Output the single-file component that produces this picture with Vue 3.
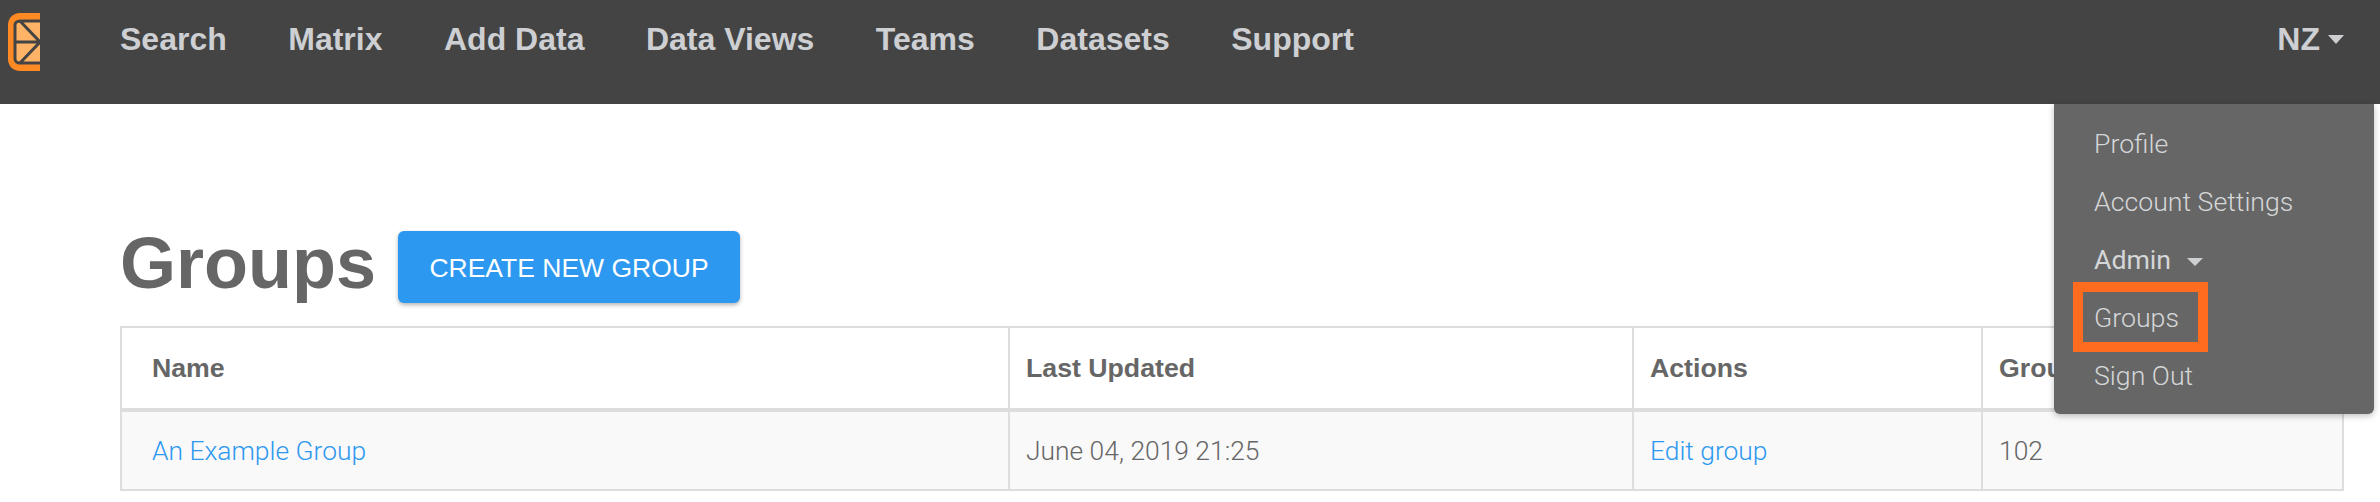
<script setup>
const navLinks = ["Search", "Matrix", "Add Data", "Data Views", "Teams", "Datasets", "Support"];
</script>

<template>
  <div class="page">
    <header class="navbar">
      <svg class="logo" width="32" height="58" viewBox="0 0 32 58">
        <path d="M32 0H12C5 0 0 5 0 12V46C0 53 5 58 12 58H32Z" fill="#ff8a24" />
        <path d="M32 8H12C9 8 7 10 7 12V46C7 48 9 50 12 50H32Z" fill="#ffb366" />
        <path
          d="M32 8H12C9 8 7 10 7 12V46C7 48 9 50 12 50H32M7 29H32M12 8L32 29L12 50"
          fill="none"
          stroke="#444"
          stroke-width="3"
        />
      </svg>
      <nav class="nav">
        <a v-for="link in navLinks" :key="link" class="nav__link">{{ link }}</a>
      </nav>
      <div class="user">NZ<span class="caret"></span></div>
    </header>

    <main class="content">
      <div class="title-row">
        <h1 class="title">Groups</h1>
        <button class="create">Create new group</button>
      </div>
      <table class="groups">
        <colgroup>
          <col class="col-name" />
          <col class="col-updated" />
          <col class="col-actions" />
          <col />
        </colgroup>
        <thead>
          <tr>
            <th>Name</th>
            <th>Last Updated</th>
            <th>Actions</th>
            <th>Group ID</th>
          </tr>
        </thead>
        <tbody>
          <tr>
            <td><a>An Example Group</a></td>
            <td>June 04, 2019 21:25</td>
            <td><a>Edit group</a></td>
            <td>102</td>
          </tr>
        </tbody>
      </table>
    </main>

    <ul class="menu">
      <li class="menu__item">Profile</li>
      <li class="menu__item">Account Settings</li>
      <li class="menu__item menu__item--admin">Admin<span class="caret caret--small"></span></li>
      <li class="menu__item menu__item--marked">Groups</li>
      <li class="menu__item">Sign Out</li>
    </ul>
  </div>
</template>

<style>
html,
body {
  margin: 0;
  background: #fff;
}
</style>

<style scoped>
.page {
  position: relative;
  height: 502px;
  overflow: hidden;
  font-family: "Liberation Sans", Arial, sans-serif;
  color: #666;
}

.navbar {
  display: flex;
  align-items: flex-start;
  box-sizing: border-box;
  height: 104px;
  padding: 13px 36px 0 8px;
  background: #444;
}

.logo {
  flex: none;
}

.nav {
  display: flex;
  gap: 61.5px;
  margin-left: 80px;
  padding-top: 8px;
}

.nav__link,
.user {
  color: #cdcfd2;
  font-size: 32px;
  font-weight: 700;
  line-height: 37px;
}

.user {
  display: flex;
  align-items: center;
  margin-left: auto;
  padding-top: 8px;
}

.caret {
  width: 0;
  height: 0;
  margin-left: 8px;
  border-top: 9px solid #cdcfd2;
  border-left: 8px solid transparent;
  border-right: 8px solid transparent;
}

.content {
  padding: 0 36px 0 120px;
}

.title-row {
  display: flex;
  align-items: center;
  height: 222px;
  box-sizing: border-box;
  padding-top: 104px;
}

.title {
  margin: 0 22px 8px 0;
  font-size: 72px;
  line-height: 80px;
  font-weight: 700;
  color: #666;
}

.create {
  width: 342px;
  height: 72px;
  padding: 3px 0 0;
  border: 0;
  border-radius: 6px;
  background: #2d98f0;
  box-shadow: 0 2px 4px rgba(0, 0, 0, 0.3);
  color: #fff;
  font-family: "Liberation Sans", Arial, sans-serif;
  font-size: 26.5px;
  font-weight: 400;
  text-transform: uppercase;
}

.groups {
  width: 100%;
  table-layout: fixed;
  border-collapse: collapse;
  font-size: 26.7px;
}

.col-name {
  width: 888px;
}

.col-updated {
  width: 624px;
}

.col-actions {
  width: 349px;
}

.groups th,
.groups td {
  padding: 0 16px;
  border: 2px solid #ddd;
  text-align: left;
}

.groups th {
  height: 80px;
  border-bottom-width: 4px;
  font-weight: 700;
}

.groups td {
  height: 77px;
  background: #f9f9f9;
  font-family: Roboto, sans-serif;
  font-size: 26.4px;
  font-weight: 300;
}

.groups th:first-child,
.groups td:first-child {
  padding-left: 30px;
}

.groups a {
  color: #2d98f0;
}

.menu {
  position: absolute;
  top: 104px;
  left: 2054px;
  box-sizing: border-box;
  width: 320px;
  height: 310px;
  margin: 0;
  padding: 11px 0 0 40px;
  list-style: none;
  border-radius: 0 0 6px 6px;
  background: #666;
  box-shadow: 0 2px 6px rgba(0, 0, 0, 0.25);
  font-family: Roboto, sans-serif;
  font-weight: 300;
  font-size: 26.7px;
  color: #d5d6d8;
}

.menu__item {
  display: flex;
  align-items: center;
  height: 58px;
}

.menu__item--admin {
  font-weight: 400;
}

.menu__item--marked {
  position: relative;
}

.menu__item--marked::before {
  content: "";
  position: absolute;
  left: -21px;
  top: -7px;
  width: 115px;
  height: 50px;
  border: 10px solid #ff6b1f;
}

.caret--small {
  margin-left: 16px;
  margin-top: 4px;
  border-top-width: 8px;
}
</style>
